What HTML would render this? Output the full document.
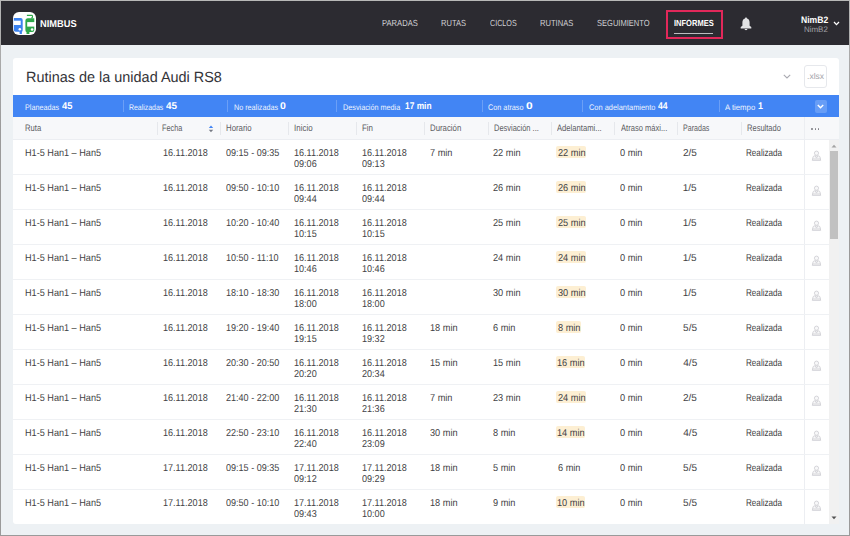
<!DOCTYPE html>
<html><head><meta charset="utf-8"><style>
html,body{margin:0;padding:0;width:850px;height:536px;overflow:hidden;background:#edf1f4}
body{position:relative;font-family:"Liberation Sans", sans-serif}
.t{position:absolute;white-space:nowrap;transform-origin:0 0;text-rendering:geometricPrecision}
</style></head><body>
<div style="position:absolute;left:0px;top:0px;width:850px;height:536px;background:linear-gradient(#b6b6b6,#9a9a9a 25%,#9a9a9a)"></div>
<div style="position:absolute;left:0px;top:0px;width:850px;height:1px;background:#b8b8b7"></div>
<div style="position:absolute;left:1px;top:1px;width:848px;height:534px;background:#edf1f4"></div>
<div style="position:absolute;left:1px;top:1px;width:848px;height:44px;background:#2c2b31"></div>
<svg style="position:absolute;left:13px;top:12px" width="23" height="23" viewBox="0 0 23 23">
<rect x="0" y="0" width="23" height="23" rx="6" fill="#fff"/>
<path d="M0.8 6 H7.6 Q9.7 6 9.7 8.1 V17.7 Q9.7 19.7 8.9 19.7 V21.9 H6.6 V19.7 H2.8 Q0.8 19.7 0.8 17.7 Z" fill="#3b82f0"/>
<rect x="0.8" y="8.7" width="6.9" height="4.3" fill="#fff"/>
<circle cx="6.8" cy="17.2" r="1.25" fill="#fff"/>
<path d="M21.3 6.3 H14.9 Q12.4 6.3 12.4 8.8 V17.9 Q12.4 19.9 13.5 19.9 V22 H16.4 V19.9 H19.3 Q21.3 19.9 21.3 17.9 Z" fill="#2ea84a"/>
<rect x="14.2" y="10.1" width="8" height="4.5" fill="#fff"/>
<circle cx="19.1" cy="17.5" r="1.3" fill="#fff"/>
<path d="M13.9 3.4 H18.6 Q19.5 3.4 19.5 4.3 V5.2 L18.4 6.4" stroke="#2ea84a" stroke-width="1.1" fill="none"/>
</svg>
<div class="t" style="left:39.60px;top:19.64px;font-size:10px;line-height:10px;font-weight:700;color:#fff;transform:scaleX(0.9271);">NIMBUS</div>
<div class="t" style="left:381.79px;top:19.17px;font-size:8.9px;line-height:8.9px;font-weight:400;color:#d2d2d6;transform:scaleX(0.8586);">PARADAS</div>
<div class="t" style="left:441.20px;top:19.17px;font-size:8.9px;line-height:8.9px;font-weight:400;color:#d2d2d6;transform:scaleX(0.8489);">RUTAS</div>
<div class="t" style="left:490.14px;top:19.17px;font-size:8.9px;line-height:8.9px;font-weight:400;color:#d2d2d6;transform:scaleX(0.8090);">CICLOS</div>
<div class="t" style="left:540.39px;top:19.17px;font-size:8.9px;line-height:8.9px;font-weight:400;color:#d2d2d6;transform:scaleX(0.8546);">RUTINAS</div>
<div class="t" style="left:597.26px;top:19.17px;font-size:8.9px;line-height:8.9px;font-weight:400;color:#d2d2d6;transform:scaleX(0.8480);">SEGUIMIENTO</div>
<div class="t" style="left:673.51px;top:19.17px;font-size:8.9px;line-height:8.9px;font-weight:700;color:#fff;transform:scaleX(0.8468);">INFORMES</div>
<div style="position:absolute;left:674px;top:32.5px;width:39px;height:1.2px;background:#bdbdc0"></div>
<div style="position:absolute;left:666px;top:10px;width:57px;height:29px;border:2px solid #e2285a;box-sizing:border-box"></div>
<svg style="position:absolute;left:739.5px;top:17.2px" width="12" height="14" viewBox="0 0 12 14">
<path d="M6 0.5 C6.7 0.5 7 1 7 1.5 C8.9 2 9.6 3.6 9.6 5.6 V8.8 L11.3 10 V11.6 H0.7 V10 L2.4 8.8 V5.6 C2.4 3.6 3.1 2 5 1.5 C5 1 5.3 0.5 6 0.5 Z" fill="#e2e2e4"/>
<path d="M4.6 12 H7.4 C7.3 12.8 6.8 13.2 6 13.2 C5.2 13.2 4.7 12.8 4.6 12 Z" fill="#e2e2e4"/>
</svg>
<div class="t" style="left:800.74px;top:14.94px;font-size:9.4px;line-height:9.4px;font-weight:700;color:#fff;transform:scaleX(0.9178);">NimB2</div>
<div class="t" style="left:804.26px;top:25.53px;font-size:8.0px;line-height:8.0px;font-weight:400;color:#a3a3a8;transform:scaleX(0.9930);">NimB2</div>
<svg style="position:absolute;left:833px;top:21px" width="7" height="5" viewBox="0 0 7 5"><path d="M1 1 L3.5 3.6 L6 1" stroke="#fff" stroke-width="1.3" fill="none"/></svg>
<div style="position:absolute;left:13px;top:58px;width:826px;height:466px;background:#fff;border-radius:3px"></div>
<div class="t" style="left:25.84px;top:70.97px;font-size:14.8px;line-height:14.8px;font-weight:400;color:#333338;transform:scaleX(0.9759);">Rutinas de la unidad Audi RS8</div>
<svg style="position:absolute;left:783px;top:73.5px" width="8" height="5" viewBox="0 0 8 5"><path d="M0.8 0.8 L4 4 L7.2 0.8" stroke="#a9a9b0" stroke-width="1.1" fill="none"/></svg>
<div style="position:absolute;left:804px;top:65px;width:23px;height:23px;border:1px solid #e6e8ec;border-radius:3px;box-sizing:border-box"></div>
<div class="t" style="left:806.93px;top:72.29px;font-size:8.4px;line-height:8.4px;font-weight:400;color:#a5a5aa;transform:scaleX(1.0213);">.xlsx</div>
<div style="position:absolute;left:13px;top:95px;width:826px;height:22px;background:#4285f4"></div>
<div style="position:absolute;left:123px;top:100px;width:1px;height:12px;background:rgba(255,255,255,0.22)"></div>
<div style="position:absolute;left:227px;top:100px;width:1px;height:12px;background:rgba(255,255,255,0.22)"></div>
<div style="position:absolute;left:336px;top:100px;width:1px;height:12px;background:rgba(255,255,255,0.22)"></div>
<div style="position:absolute;left:482px;top:100px;width:1px;height:12px;background:rgba(255,255,255,0.22)"></div>
<div style="position:absolute;left:582px;top:100px;width:1px;height:12px;background:rgba(255,255,255,0.22)"></div>
<div style="position:absolute;left:719px;top:100px;width:1px;height:12px;background:rgba(255,255,255,0.22)"></div>
<div class="t" style="left:25.12px;top:103.94px;font-size:8.1px;line-height:8.1px;font-weight:400;color:#eef4fe;transform:scaleX(0.8891);">Planeadas</div>
<div class="t" style="left:61.86px;top:101.59px;font-size:9.7px;line-height:9.7px;font-weight:700;color:#fff;transform:scaleX(0.9635);">45</div>
<div class="t" style="left:128.95px;top:103.94px;font-size:8.1px;line-height:8.1px;font-weight:400;color:#eef4fe;transform:scaleX(0.8563);">Realizadas</div>
<div class="t" style="left:165.65px;top:101.59px;font-size:9.7px;line-height:9.7px;font-weight:700;color:#fff;transform:scaleX(1.0213);">45</div>
<div class="t" style="left:233.52px;top:103.94px;font-size:8.1px;line-height:8.1px;font-weight:400;color:#eef4fe;transform:scaleX(0.8889);">No realizadas</div>
<div class="t" style="left:280.38px;top:101.59px;font-size:9.7px;line-height:9.7px;font-weight:700;color:#fff;transform:scaleX(1.0852);">0</div>
<div class="t" style="left:343.22px;top:103.94px;font-size:8.1px;line-height:8.1px;font-weight:400;color:#eef4fe;transform:scaleX(0.8963);">Desviación media</div>
<div class="t" style="left:404.50px;top:101.59px;font-size:9.7px;line-height:9.7px;font-weight:700;color:#fff;transform:scaleX(0.8633);">17 min</div>
<div class="t" style="left:487.64px;top:103.94px;font-size:8.1px;line-height:8.1px;font-weight:400;color:#eef4fe;transform:scaleX(0.8976);">Con atraso</div>
<div class="t" style="left:525.92px;top:101.59px;font-size:9.7px;line-height:9.7px;font-weight:700;color:#fff;transform:scaleX(1.2371);">0</div>
<div class="t" style="left:588.63px;top:103.94px;font-size:8.1px;line-height:8.1px;font-weight:400;color:#eef4fe;transform:scaleX(0.9169);">Con adelantamiento</div>
<div class="t" style="left:658.27px;top:101.59px;font-size:9.7px;line-height:9.7px;font-weight:700;color:#fff;transform:scaleX(0.8891);">44</div>
<div class="t" style="left:725.40px;top:103.94px;font-size:8.1px;line-height:8.1px;font-weight:400;color:#eef4fe;transform:scaleX(0.9588);">A tiempo</div>
<div class="t" style="left:758.26px;top:101.59px;font-size:9.7px;line-height:9.7px;font-weight:700;color:#fff;transform:scaleX(0.9213);">1</div>
<div style="position:absolute;left:814.5px;top:100px;width:12.5px;height:12.5px;background:rgba(255,255,255,0.2);border-radius:2px"></div>
<svg style="position:absolute;left:817px;top:104px" width="7" height="5" viewBox="0 0 7 5"><path d="M0.8 0.9 L3.5 3.8 L6.2 0.9" stroke="#fff" stroke-width="1.4" fill="none"/></svg>
<div style="position:absolute;left:13px;top:117px;width:826px;height:22px;background:#f7f8fa"></div>
<div style="position:absolute;left:13px;top:139px;width:826px;height:1px;background:#eceef2"></div>
<div style="position:absolute;left:157px;top:122px;width:1px;height:13px;background:#e6e8ec"></div>
<div style="position:absolute;left:220px;top:122px;width:1px;height:13px;background:#e6e8ec"></div>
<div style="position:absolute;left:288px;top:122px;width:1px;height:13px;background:#e6e8ec"></div>
<div style="position:absolute;left:356px;top:122px;width:1px;height:13px;background:#e6e8ec"></div>
<div style="position:absolute;left:424px;top:122px;width:1px;height:13px;background:#e6e8ec"></div>
<div style="position:absolute;left:488px;top:122px;width:1px;height:13px;background:#e6e8ec"></div>
<div style="position:absolute;left:551px;top:122px;width:1px;height:13px;background:#e6e8ec"></div>
<div style="position:absolute;left:614px;top:122px;width:1px;height:13px;background:#e6e8ec"></div>
<div style="position:absolute;left:677px;top:122px;width:1px;height:13px;background:#e6e8ec"></div>
<div style="position:absolute;left:741px;top:122px;width:1px;height:13px;background:#e6e8ec"></div>
<div style="position:absolute;left:804px;top:117px;width:1px;height:407px;background:#eceef2"></div>
<div class="t" style="left:25.29px;top:123.53px;font-size:9.3px;line-height:9.3px;font-weight:400;color:#5c5c62;transform:scaleX(0.8210);">Ruta</div>
<div class="t" style="left:162.32px;top:123.53px;font-size:9.3px;line-height:9.3px;font-weight:400;color:#5c5c62;transform:scaleX(0.7845);">Fecha</div>
<div class="t" style="left:226.17px;top:123.53px;font-size:9.3px;line-height:9.3px;font-weight:400;color:#5c5c62;transform:scaleX(0.8405);">Horario</div>
<div class="t" style="left:293.88px;top:123.53px;font-size:9.3px;line-height:9.3px;font-weight:400;color:#5c5c62;transform:scaleX(0.8583);">Inicio</div>
<div class="t" style="left:362.16px;top:123.53px;font-size:9.3px;line-height:9.3px;font-weight:400;color:#5c5c62;transform:scaleX(0.8550);">Fin</div>
<div class="t" style="left:430.18px;top:123.53px;font-size:9.3px;line-height:9.3px;font-weight:400;color:#5c5c62;transform:scaleX(0.8396);">Duración</div>
<div class="t" style="left:494.00px;top:123.53px;font-size:9.3px;line-height:9.3px;font-weight:400;color:#5c5c62;transform:scaleX(0.8023);">Desviación ...</div>
<div class="t" style="left:557.40px;top:123.53px;font-size:9.3px;line-height:9.3px;font-weight:400;color:#5c5c62;transform:scaleX(0.8235);">Adelantami...</div>
<div class="t" style="left:620.50px;top:123.53px;font-size:9.3px;line-height:9.3px;font-weight:400;color:#5c5c62;transform:scaleX(0.8145);">Atraso máxi...</div>
<div class="t" style="left:683.43px;top:123.53px;font-size:9.3px;line-height:9.3px;font-weight:400;color:#5c5c62;transform:scaleX(0.7625);">Paradas</div>
<div class="t" style="left:746.50px;top:123.53px;font-size:9.3px;line-height:9.3px;font-weight:400;color:#5c5c62;transform:scaleX(0.8101);">Resultado</div>
<div style="position:absolute;left:811.4px;top:128.4px;width:1.8px;height:1.8px;background:#7c7c82;border-radius:50%"></div>
<div style="position:absolute;left:814.5px;top:128.4px;width:1.8px;height:1.8px;background:#7c7c82;border-radius:50%"></div>
<div style="position:absolute;left:817.6px;top:128.4px;width:1.8px;height:1.8px;background:#7c7c82;border-radius:50%"></div>
<svg style="position:absolute;left:208px;top:125px" width="6" height="8" viewBox="0 0 6 8"><path d="M0.8 3 L3 0.6 L5.2 3 Z" fill="#4285f4"/><path d="M0.8 4.8 L3 7.2 L5.2 4.8 Z" fill="#777b85"/></svg>
<div style="position:absolute;left:13px;top:174px;width:816px;height:1px;background:#eff1f4"></div>
<div class="t" style="left:25.37px;top:148.53px;font-size:10px;line-height:10px;font-weight:400;color:#3f3f44;transform:scaleX(0.9117);">H1-5 Han1 – Han5</div>
<div class="t" style="left:163.12px;top:148.53px;font-size:10px;line-height:10px;font-weight:400;color:#3f3f44;transform:scaleX(0.9076);">16.11.2018</div>
<div class="t" style="left:226.04px;top:148.53px;font-size:10px;line-height:10px;font-weight:400;color:#3f3f44;transform:scaleX(0.9046);">09:15 - 09:35</div>
<div class="t" style="left:294.32px;top:148.53px;font-size:10px;line-height:10px;font-weight:400;color:#3f3f44;transform:scaleX(0.9076);">16.11.2018</div>
<div class="t" style="left:294.14px;top:159.53px;font-size:10px;line-height:10px;font-weight:400;color:#3f3f44;transform:scaleX(0.9076);">09:06</div>
<div class="t" style="left:362.12px;top:148.53px;font-size:10px;line-height:10px;font-weight:400;color:#3f3f44;transform:scaleX(0.9076);">16.11.2018</div>
<div class="t" style="left:362.14px;top:159.53px;font-size:10px;line-height:10px;font-weight:400;color:#3f3f44;transform:scaleX(0.9076);">09:13</div>
<div class="t" style="left:430.14px;top:148.53px;font-size:10px;line-height:10px;font-weight:400;color:#3f3f44;transform:scaleX(0.9185);">7 min</div>
<div class="t" style="left:492.74px;top:148.53px;font-size:10px;line-height:10px;font-weight:400;color:#3f3f44;transform:scaleX(0.9185);">22 min</div>
<div style="position:absolute;left:556.2px;top:146.2px;width:29.5px;height:11.8px;background:#fdefd3;border-radius:2px"></div>
<div class="t" style="left:557.54px;top:148.53px;font-size:10px;line-height:10px;font-weight:400;color:#3f3f44;transform:scaleX(0.9185);">22 min</div>
<div class="t" style="left:619.63px;top:148.53px;font-size:10px;line-height:10px;font-weight:400;color:#3f3f44;transform:scaleX(0.9185);">0 min</div>
<div class="t" style="left:683.00px;top:148.53px;font-size:10px;line-height:10px;font-weight:400;color:#3f3f44;">2/5</div>
<div class="t" style="left:746.35px;top:148.53px;font-size:10px;line-height:10px;font-weight:400;color:#3f3f44;transform:scaleX(0.8110);">Realizada</div>
<svg style="position:absolute;left:811px;top:149.8px" width="12" height="12" viewBox="0 0 12 12"><g stroke="#d0d0d5" stroke-width="0.85" fill="#f8f8f9"><circle cx="5.5" cy="3.2" r="2.1"/><path d="M1.3 10.4 L2 7 Q2.4 5.8 3.8 5.8 H7.2 Q8.6 5.8 9 7 L9.7 10.4 Z"/><path d="M4.2 5.9 L5.5 8.1 L6.8 5.9" fill="none"/><path d="M1.5 9 H9.5" fill="none"/></g></svg>
<div style="position:absolute;left:13px;top:209px;width:816px;height:1px;background:#eff1f4"></div>
<div class="t" style="left:25.37px;top:183.53px;font-size:10px;line-height:10px;font-weight:400;color:#3f3f44;transform:scaleX(0.9117);">H1-5 Han1 – Han5</div>
<div class="t" style="left:163.12px;top:183.53px;font-size:10px;line-height:10px;font-weight:400;color:#3f3f44;transform:scaleX(0.9076);">16.11.2018</div>
<div class="t" style="left:226.04px;top:183.53px;font-size:10px;line-height:10px;font-weight:400;color:#3f3f44;transform:scaleX(0.9046);">09:50 - 10:10</div>
<div class="t" style="left:294.32px;top:183.53px;font-size:10px;line-height:10px;font-weight:400;color:#3f3f44;transform:scaleX(0.9076);">16.11.2018</div>
<div class="t" style="left:294.14px;top:194.53px;font-size:10px;line-height:10px;font-weight:400;color:#3f3f44;transform:scaleX(0.9076);">09:44</div>
<div class="t" style="left:362.12px;top:183.53px;font-size:10px;line-height:10px;font-weight:400;color:#3f3f44;transform:scaleX(0.9076);">16.11.2018</div>
<div class="t" style="left:362.14px;top:194.53px;font-size:10px;line-height:10px;font-weight:400;color:#3f3f44;transform:scaleX(0.9076);">09:44</div>
<div class="t" style="left:492.74px;top:183.53px;font-size:10px;line-height:10px;font-weight:400;color:#3f3f44;transform:scaleX(0.9185);">26 min</div>
<div style="position:absolute;left:556.2px;top:181.2px;width:29.5px;height:11.8px;background:#fdefd3;border-radius:2px"></div>
<div class="t" style="left:557.54px;top:183.53px;font-size:10px;line-height:10px;font-weight:400;color:#3f3f44;transform:scaleX(0.9185);">26 min</div>
<div class="t" style="left:619.63px;top:183.53px;font-size:10px;line-height:10px;font-weight:400;color:#3f3f44;transform:scaleX(0.9185);">0 min</div>
<div class="t" style="left:682.75px;top:183.53px;font-size:10px;line-height:10px;font-weight:400;color:#3f3f44;">1/5</div>
<div class="t" style="left:746.35px;top:183.53px;font-size:10px;line-height:10px;font-weight:400;color:#3f3f44;transform:scaleX(0.8110);">Realizada</div>
<svg style="position:absolute;left:811px;top:184.8px" width="12" height="12" viewBox="0 0 12 12"><g stroke="#d0d0d5" stroke-width="0.85" fill="#f8f8f9"><circle cx="5.5" cy="3.2" r="2.1"/><path d="M1.3 10.4 L2 7 Q2.4 5.8 3.8 5.8 H7.2 Q8.6 5.8 9 7 L9.7 10.4 Z"/><path d="M4.2 5.9 L5.5 8.1 L6.8 5.9" fill="none"/><path d="M1.5 9 H9.5" fill="none"/></g></svg>
<div style="position:absolute;left:13px;top:244px;width:816px;height:1px;background:#eff1f4"></div>
<div class="t" style="left:25.37px;top:218.53px;font-size:10px;line-height:10px;font-weight:400;color:#3f3f44;transform:scaleX(0.9117);">H1-5 Han1 – Han5</div>
<div class="t" style="left:163.12px;top:218.53px;font-size:10px;line-height:10px;font-weight:400;color:#3f3f44;transform:scaleX(0.9076);">16.11.2018</div>
<div class="t" style="left:225.72px;top:218.53px;font-size:10px;line-height:10px;font-weight:400;color:#3f3f44;transform:scaleX(0.9046);">10:20 - 10:40</div>
<div class="t" style="left:294.32px;top:218.53px;font-size:10px;line-height:10px;font-weight:400;color:#3f3f44;transform:scaleX(0.9076);">16.11.2018</div>
<div class="t" style="left:293.82px;top:229.53px;font-size:10px;line-height:10px;font-weight:400;color:#3f3f44;transform:scaleX(0.9076);">10:15</div>
<div class="t" style="left:362.12px;top:218.53px;font-size:10px;line-height:10px;font-weight:400;color:#3f3f44;transform:scaleX(0.9076);">16.11.2018</div>
<div class="t" style="left:361.82px;top:229.53px;font-size:10px;line-height:10px;font-weight:400;color:#3f3f44;transform:scaleX(0.9076);">10:15</div>
<div class="t" style="left:492.74px;top:218.53px;font-size:10px;line-height:10px;font-weight:400;color:#3f3f44;transform:scaleX(0.9185);">25 min</div>
<div style="position:absolute;left:556.2px;top:216.2px;width:29.5px;height:11.8px;background:#fdefd3;border-radius:2px"></div>
<div class="t" style="left:557.54px;top:218.53px;font-size:10px;line-height:10px;font-weight:400;color:#3f3f44;transform:scaleX(0.9185);">25 min</div>
<div class="t" style="left:619.63px;top:218.53px;font-size:10px;line-height:10px;font-weight:400;color:#3f3f44;transform:scaleX(0.9185);">0 min</div>
<div class="t" style="left:682.75px;top:218.53px;font-size:10px;line-height:10px;font-weight:400;color:#3f3f44;">1/5</div>
<div class="t" style="left:746.35px;top:218.53px;font-size:10px;line-height:10px;font-weight:400;color:#3f3f44;transform:scaleX(0.8110);">Realizada</div>
<svg style="position:absolute;left:811px;top:219.8px" width="12" height="12" viewBox="0 0 12 12"><g stroke="#d0d0d5" stroke-width="0.85" fill="#f8f8f9"><circle cx="5.5" cy="3.2" r="2.1"/><path d="M1.3 10.4 L2 7 Q2.4 5.8 3.8 5.8 H7.2 Q8.6 5.8 9 7 L9.7 10.4 Z"/><path d="M4.2 5.9 L5.5 8.1 L6.8 5.9" fill="none"/><path d="M1.5 9 H9.5" fill="none"/></g></svg>
<div style="position:absolute;left:13px;top:279px;width:816px;height:1px;background:#eff1f4"></div>
<div class="t" style="left:25.37px;top:253.53px;font-size:10px;line-height:10px;font-weight:400;color:#3f3f44;transform:scaleX(0.9117);">H1-5 Han1 – Han5</div>
<div class="t" style="left:163.12px;top:253.53px;font-size:10px;line-height:10px;font-weight:400;color:#3f3f44;transform:scaleX(0.9076);">16.11.2018</div>
<div class="t" style="left:225.72px;top:253.53px;font-size:10px;line-height:10px;font-weight:400;color:#3f3f44;transform:scaleX(0.9046);">10:50 - 11:10</div>
<div class="t" style="left:294.32px;top:253.53px;font-size:10px;line-height:10px;font-weight:400;color:#3f3f44;transform:scaleX(0.9076);">16.11.2018</div>
<div class="t" style="left:293.82px;top:264.54px;font-size:10px;line-height:10px;font-weight:400;color:#3f3f44;transform:scaleX(0.9076);">10:46</div>
<div class="t" style="left:362.12px;top:253.53px;font-size:10px;line-height:10px;font-weight:400;color:#3f3f44;transform:scaleX(0.9076);">16.11.2018</div>
<div class="t" style="left:361.82px;top:264.54px;font-size:10px;line-height:10px;font-weight:400;color:#3f3f44;transform:scaleX(0.9076);">10:46</div>
<div class="t" style="left:492.74px;top:253.53px;font-size:10px;line-height:10px;font-weight:400;color:#3f3f44;transform:scaleX(0.9185);">24 min</div>
<div style="position:absolute;left:556.2px;top:251.2px;width:29.5px;height:11.8px;background:#fdefd3;border-radius:2px"></div>
<div class="t" style="left:557.54px;top:253.53px;font-size:10px;line-height:10px;font-weight:400;color:#3f3f44;transform:scaleX(0.9185);">24 min</div>
<div class="t" style="left:619.63px;top:253.53px;font-size:10px;line-height:10px;font-weight:400;color:#3f3f44;transform:scaleX(0.9185);">0 min</div>
<div class="t" style="left:682.75px;top:253.53px;font-size:10px;line-height:10px;font-weight:400;color:#3f3f44;">1/5</div>
<div class="t" style="left:746.35px;top:253.53px;font-size:10px;line-height:10px;font-weight:400;color:#3f3f44;transform:scaleX(0.8110);">Realizada</div>
<svg style="position:absolute;left:811px;top:254.8px" width="12" height="12" viewBox="0 0 12 12"><g stroke="#d0d0d5" stroke-width="0.85" fill="#f8f8f9"><circle cx="5.5" cy="3.2" r="2.1"/><path d="M1.3 10.4 L2 7 Q2.4 5.8 3.8 5.8 H7.2 Q8.6 5.8 9 7 L9.7 10.4 Z"/><path d="M4.2 5.9 L5.5 8.1 L6.8 5.9" fill="none"/><path d="M1.5 9 H9.5" fill="none"/></g></svg>
<div style="position:absolute;left:13px;top:314px;width:816px;height:1px;background:#eff1f4"></div>
<div class="t" style="left:25.37px;top:288.54px;font-size:10px;line-height:10px;font-weight:400;color:#3f3f44;transform:scaleX(0.9117);">H1-5 Han1 – Han5</div>
<div class="t" style="left:163.12px;top:288.54px;font-size:10px;line-height:10px;font-weight:400;color:#3f3f44;transform:scaleX(0.9076);">16.11.2018</div>
<div class="t" style="left:225.72px;top:288.54px;font-size:10px;line-height:10px;font-weight:400;color:#3f3f44;transform:scaleX(0.9046);">18:10 - 18:30</div>
<div class="t" style="left:294.32px;top:288.54px;font-size:10px;line-height:10px;font-weight:400;color:#3f3f44;transform:scaleX(0.9076);">16.11.2018</div>
<div class="t" style="left:293.82px;top:299.54px;font-size:10px;line-height:10px;font-weight:400;color:#3f3f44;transform:scaleX(0.9076);">18:00</div>
<div class="t" style="left:362.12px;top:288.54px;font-size:10px;line-height:10px;font-weight:400;color:#3f3f44;transform:scaleX(0.9076);">16.11.2018</div>
<div class="t" style="left:361.82px;top:299.54px;font-size:10px;line-height:10px;font-weight:400;color:#3f3f44;transform:scaleX(0.9076);">18:00</div>
<div class="t" style="left:492.83px;top:288.54px;font-size:10px;line-height:10px;font-weight:400;color:#3f3f44;transform:scaleX(0.9185);">30 min</div>
<div style="position:absolute;left:556.2px;top:286.2px;width:29.59px;height:11.8px;background:#fdefd3;border-radius:2px"></div>
<div class="t" style="left:557.63px;top:288.54px;font-size:10px;line-height:10px;font-weight:400;color:#3f3f44;transform:scaleX(0.9185);">30 min</div>
<div class="t" style="left:619.63px;top:288.54px;font-size:10px;line-height:10px;font-weight:400;color:#3f3f44;transform:scaleX(0.9185);">0 min</div>
<div class="t" style="left:682.75px;top:288.54px;font-size:10px;line-height:10px;font-weight:400;color:#3f3f44;">1/5</div>
<div class="t" style="left:746.35px;top:288.54px;font-size:10px;line-height:10px;font-weight:400;color:#3f3f44;transform:scaleX(0.8110);">Realizada</div>
<svg style="position:absolute;left:811px;top:289.8px" width="12" height="12" viewBox="0 0 12 12"><g stroke="#d0d0d5" stroke-width="0.85" fill="#f8f8f9"><circle cx="5.5" cy="3.2" r="2.1"/><path d="M1.3 10.4 L2 7 Q2.4 5.8 3.8 5.8 H7.2 Q8.6 5.8 9 7 L9.7 10.4 Z"/><path d="M4.2 5.9 L5.5 8.1 L6.8 5.9" fill="none"/><path d="M1.5 9 H9.5" fill="none"/></g></svg>
<div style="position:absolute;left:13px;top:349px;width:816px;height:1px;background:#eff1f4"></div>
<div class="t" style="left:25.37px;top:323.54px;font-size:10px;line-height:10px;font-weight:400;color:#3f3f44;transform:scaleX(0.9117);">H1-5 Han1 – Han5</div>
<div class="t" style="left:163.12px;top:323.54px;font-size:10px;line-height:10px;font-weight:400;color:#3f3f44;transform:scaleX(0.9076);">16.11.2018</div>
<div class="t" style="left:225.72px;top:323.54px;font-size:10px;line-height:10px;font-weight:400;color:#3f3f44;transform:scaleX(0.9046);">19:20 - 19:40</div>
<div class="t" style="left:294.32px;top:323.54px;font-size:10px;line-height:10px;font-weight:400;color:#3f3f44;transform:scaleX(0.9076);">16.11.2018</div>
<div class="t" style="left:293.82px;top:334.54px;font-size:10px;line-height:10px;font-weight:400;color:#3f3f44;transform:scaleX(0.9076);">19:15</div>
<div class="t" style="left:362.12px;top:323.54px;font-size:10px;line-height:10px;font-weight:400;color:#3f3f44;transform:scaleX(0.9076);">16.11.2018</div>
<div class="t" style="left:361.82px;top:334.54px;font-size:10px;line-height:10px;font-weight:400;color:#3f3f44;transform:scaleX(0.9076);">19:32</div>
<div class="t" style="left:429.91px;top:323.54px;font-size:10px;line-height:10px;font-weight:400;color:#3f3f44;transform:scaleX(0.9185);">18 min</div>
<div class="t" style="left:492.74px;top:323.54px;font-size:10px;line-height:10px;font-weight:400;color:#3f3f44;transform:scaleX(0.9185);">6 min</div>
<div style="position:absolute;left:556.2px;top:321.2px;width:24.45px;height:11.8px;background:#fdefd3;border-radius:2px"></div>
<div class="t" style="left:557.59px;top:323.54px;font-size:10px;line-height:10px;font-weight:400;color:#3f3f44;transform:scaleX(0.9185);">8 min</div>
<div class="t" style="left:619.63px;top:323.54px;font-size:10px;line-height:10px;font-weight:400;color:#3f3f44;transform:scaleX(0.9185);">0 min</div>
<div class="t" style="left:683.10px;top:323.54px;font-size:10px;line-height:10px;font-weight:400;color:#3f3f44;">5/5</div>
<div class="t" style="left:746.35px;top:323.54px;font-size:10px;line-height:10px;font-weight:400;color:#3f3f44;transform:scaleX(0.8110);">Realizada</div>
<svg style="position:absolute;left:811px;top:324.8px" width="12" height="12" viewBox="0 0 12 12"><g stroke="#d0d0d5" stroke-width="0.85" fill="#f8f8f9"><circle cx="5.5" cy="3.2" r="2.1"/><path d="M1.3 10.4 L2 7 Q2.4 5.8 3.8 5.8 H7.2 Q8.6 5.8 9 7 L9.7 10.4 Z"/><path d="M4.2 5.9 L5.5 8.1 L6.8 5.9" fill="none"/><path d="M1.5 9 H9.5" fill="none"/></g></svg>
<div style="position:absolute;left:13px;top:384px;width:816px;height:1px;background:#eff1f4"></div>
<div class="t" style="left:25.37px;top:358.54px;font-size:10px;line-height:10px;font-weight:400;color:#3f3f44;transform:scaleX(0.9117);">H1-5 Han1 – Han5</div>
<div class="t" style="left:163.12px;top:358.54px;font-size:10px;line-height:10px;font-weight:400;color:#3f3f44;transform:scaleX(0.9076);">16.11.2018</div>
<div class="t" style="left:225.95px;top:358.54px;font-size:10px;line-height:10px;font-weight:400;color:#3f3f44;transform:scaleX(0.9046);">20:30 - 20:50</div>
<div class="t" style="left:294.32px;top:358.54px;font-size:10px;line-height:10px;font-weight:400;color:#3f3f44;transform:scaleX(0.9076);">16.11.2018</div>
<div class="t" style="left:294.05px;top:369.54px;font-size:10px;line-height:10px;font-weight:400;color:#3f3f44;transform:scaleX(0.9076);">20:20</div>
<div class="t" style="left:362.12px;top:358.54px;font-size:10px;line-height:10px;font-weight:400;color:#3f3f44;transform:scaleX(0.9076);">16.11.2018</div>
<div class="t" style="left:362.05px;top:369.54px;font-size:10px;line-height:10px;font-weight:400;color:#3f3f44;transform:scaleX(0.9076);">20:34</div>
<div class="t" style="left:429.91px;top:358.54px;font-size:10px;line-height:10px;font-weight:400;color:#3f3f44;transform:scaleX(0.9185);">15 min</div>
<div class="t" style="left:492.51px;top:358.54px;font-size:10px;line-height:10px;font-weight:400;color:#3f3f44;transform:scaleX(0.9185);">15 min</div>
<div style="position:absolute;left:556.2px;top:356.2px;width:29.27px;height:11.8px;background:#fdefd3;border-radius:2px"></div>
<div class="t" style="left:557.31px;top:358.54px;font-size:10px;line-height:10px;font-weight:400;color:#3f3f44;transform:scaleX(0.9185);">16 min</div>
<div class="t" style="left:619.63px;top:358.54px;font-size:10px;line-height:10px;font-weight:400;color:#3f3f44;transform:scaleX(0.9185);">0 min</div>
<div class="t" style="left:683.30px;top:358.54px;font-size:10px;line-height:10px;font-weight:400;color:#3f3f44;">4/5</div>
<div class="t" style="left:746.35px;top:358.54px;font-size:10px;line-height:10px;font-weight:400;color:#3f3f44;transform:scaleX(0.8110);">Realizada</div>
<svg style="position:absolute;left:811px;top:359.8px" width="12" height="12" viewBox="0 0 12 12"><g stroke="#d0d0d5" stroke-width="0.85" fill="#f8f8f9"><circle cx="5.5" cy="3.2" r="2.1"/><path d="M1.3 10.4 L2 7 Q2.4 5.8 3.8 5.8 H7.2 Q8.6 5.8 9 7 L9.7 10.4 Z"/><path d="M4.2 5.9 L5.5 8.1 L6.8 5.9" fill="none"/><path d="M1.5 9 H9.5" fill="none"/></g></svg>
<div style="position:absolute;left:13px;top:419px;width:816px;height:1px;background:#eff1f4"></div>
<div class="t" style="left:25.37px;top:393.54px;font-size:10px;line-height:10px;font-weight:400;color:#3f3f44;transform:scaleX(0.9117);">H1-5 Han1 – Han5</div>
<div class="t" style="left:163.12px;top:393.54px;font-size:10px;line-height:10px;font-weight:400;color:#3f3f44;transform:scaleX(0.9076);">16.11.2018</div>
<div class="t" style="left:225.95px;top:393.54px;font-size:10px;line-height:10px;font-weight:400;color:#3f3f44;transform:scaleX(0.9046);">21:40 - 22:00</div>
<div class="t" style="left:294.32px;top:393.54px;font-size:10px;line-height:10px;font-weight:400;color:#3f3f44;transform:scaleX(0.9076);">16.11.2018</div>
<div class="t" style="left:294.05px;top:404.54px;font-size:10px;line-height:10px;font-weight:400;color:#3f3f44;transform:scaleX(0.9076);">21:30</div>
<div class="t" style="left:362.12px;top:393.54px;font-size:10px;line-height:10px;font-weight:400;color:#3f3f44;transform:scaleX(0.9076);">16.11.2018</div>
<div class="t" style="left:362.05px;top:404.54px;font-size:10px;line-height:10px;font-weight:400;color:#3f3f44;transform:scaleX(0.9076);">21:36</div>
<div class="t" style="left:430.14px;top:393.54px;font-size:10px;line-height:10px;font-weight:400;color:#3f3f44;transform:scaleX(0.9185);">7 min</div>
<div class="t" style="left:492.74px;top:393.54px;font-size:10px;line-height:10px;font-weight:400;color:#3f3f44;transform:scaleX(0.9185);">23 min</div>
<div style="position:absolute;left:556.2px;top:391.2px;width:29.5px;height:11.8px;background:#fdefd3;border-radius:2px"></div>
<div class="t" style="left:557.54px;top:393.54px;font-size:10px;line-height:10px;font-weight:400;color:#3f3f44;transform:scaleX(0.9185);">24 min</div>
<div class="t" style="left:619.63px;top:393.54px;font-size:10px;line-height:10px;font-weight:400;color:#3f3f44;transform:scaleX(0.9185);">0 min</div>
<div class="t" style="left:683.00px;top:393.54px;font-size:10px;line-height:10px;font-weight:400;color:#3f3f44;">2/5</div>
<div class="t" style="left:746.35px;top:393.54px;font-size:10px;line-height:10px;font-weight:400;color:#3f3f44;transform:scaleX(0.8110);">Realizada</div>
<svg style="position:absolute;left:811px;top:394.8px" width="12" height="12" viewBox="0 0 12 12"><g stroke="#d0d0d5" stroke-width="0.85" fill="#f8f8f9"><circle cx="5.5" cy="3.2" r="2.1"/><path d="M1.3 10.4 L2 7 Q2.4 5.8 3.8 5.8 H7.2 Q8.6 5.8 9 7 L9.7 10.4 Z"/><path d="M4.2 5.9 L5.5 8.1 L6.8 5.9" fill="none"/><path d="M1.5 9 H9.5" fill="none"/></g></svg>
<div style="position:absolute;left:13px;top:454px;width:816px;height:1px;background:#eff1f4"></div>
<div class="t" style="left:25.37px;top:428.54px;font-size:10px;line-height:10px;font-weight:400;color:#3f3f44;transform:scaleX(0.9117);">H1-5 Han1 – Han5</div>
<div class="t" style="left:163.12px;top:428.54px;font-size:10px;line-height:10px;font-weight:400;color:#3f3f44;transform:scaleX(0.9076);">16.11.2018</div>
<div class="t" style="left:225.95px;top:428.54px;font-size:10px;line-height:10px;font-weight:400;color:#3f3f44;transform:scaleX(0.9046);">22:50 - 23:10</div>
<div class="t" style="left:294.32px;top:428.54px;font-size:10px;line-height:10px;font-weight:400;color:#3f3f44;transform:scaleX(0.9076);">16.11.2018</div>
<div class="t" style="left:294.05px;top:439.54px;font-size:10px;line-height:10px;font-weight:400;color:#3f3f44;transform:scaleX(0.9076);">22:40</div>
<div class="t" style="left:362.12px;top:428.54px;font-size:10px;line-height:10px;font-weight:400;color:#3f3f44;transform:scaleX(0.9076);">16.11.2018</div>
<div class="t" style="left:362.05px;top:439.54px;font-size:10px;line-height:10px;font-weight:400;color:#3f3f44;transform:scaleX(0.9076);">23:09</div>
<div class="t" style="left:430.23px;top:428.54px;font-size:10px;line-height:10px;font-weight:400;color:#3f3f44;transform:scaleX(0.9185);">30 min</div>
<div class="t" style="left:492.79px;top:428.54px;font-size:10px;line-height:10px;font-weight:400;color:#3f3f44;transform:scaleX(0.9185);">8 min</div>
<div style="position:absolute;left:556.2px;top:426.2px;width:29.27px;height:11.8px;background:#fdefd3;border-radius:2px"></div>
<div class="t" style="left:557.31px;top:428.54px;font-size:10px;line-height:10px;font-weight:400;color:#3f3f44;transform:scaleX(0.9185);">14 min</div>
<div class="t" style="left:619.63px;top:428.54px;font-size:10px;line-height:10px;font-weight:400;color:#3f3f44;transform:scaleX(0.9185);">0 min</div>
<div class="t" style="left:683.30px;top:428.54px;font-size:10px;line-height:10px;font-weight:400;color:#3f3f44;">4/5</div>
<div class="t" style="left:746.35px;top:428.54px;font-size:10px;line-height:10px;font-weight:400;color:#3f3f44;transform:scaleX(0.8110);">Realizada</div>
<svg style="position:absolute;left:811px;top:429.8px" width="12" height="12" viewBox="0 0 12 12"><g stroke="#d0d0d5" stroke-width="0.85" fill="#f8f8f9"><circle cx="5.5" cy="3.2" r="2.1"/><path d="M1.3 10.4 L2 7 Q2.4 5.8 3.8 5.8 H7.2 Q8.6 5.8 9 7 L9.7 10.4 Z"/><path d="M4.2 5.9 L5.5 8.1 L6.8 5.9" fill="none"/><path d="M1.5 9 H9.5" fill="none"/></g></svg>
<div style="position:absolute;left:13px;top:489px;width:816px;height:1px;background:#eff1f4"></div>
<div class="t" style="left:25.37px;top:463.54px;font-size:10px;line-height:10px;font-weight:400;color:#3f3f44;transform:scaleX(0.9117);">H1-5 Han1 – Han5</div>
<div class="t" style="left:163.12px;top:463.54px;font-size:10px;line-height:10px;font-weight:400;color:#3f3f44;transform:scaleX(0.9076);">17.11.2018</div>
<div class="t" style="left:226.04px;top:463.54px;font-size:10px;line-height:10px;font-weight:400;color:#3f3f44;transform:scaleX(0.9046);">09:15 - 09:35</div>
<div class="t" style="left:294.32px;top:463.54px;font-size:10px;line-height:10px;font-weight:400;color:#3f3f44;transform:scaleX(0.9076);">17.11.2018</div>
<div class="t" style="left:294.14px;top:474.54px;font-size:10px;line-height:10px;font-weight:400;color:#3f3f44;transform:scaleX(0.9076);">09:12</div>
<div class="t" style="left:362.12px;top:463.54px;font-size:10px;line-height:10px;font-weight:400;color:#3f3f44;transform:scaleX(0.9076);">17.11.2018</div>
<div class="t" style="left:362.14px;top:474.54px;font-size:10px;line-height:10px;font-weight:400;color:#3f3f44;transform:scaleX(0.9076);">09:29</div>
<div class="t" style="left:429.91px;top:463.54px;font-size:10px;line-height:10px;font-weight:400;color:#3f3f44;transform:scaleX(0.9185);">18 min</div>
<div class="t" style="left:492.83px;top:463.54px;font-size:10px;line-height:10px;font-weight:400;color:#3f3f44;transform:scaleX(0.9185);">5 min</div>
<div class="t" style="left:557.54px;top:463.54px;font-size:10px;line-height:10px;font-weight:400;color:#3f3f44;transform:scaleX(0.9185);">6 min</div>
<div class="t" style="left:619.63px;top:463.54px;font-size:10px;line-height:10px;font-weight:400;color:#3f3f44;transform:scaleX(0.9185);">0 min</div>
<div class="t" style="left:683.10px;top:463.54px;font-size:10px;line-height:10px;font-weight:400;color:#3f3f44;">5/5</div>
<div class="t" style="left:746.35px;top:463.54px;font-size:10px;line-height:10px;font-weight:400;color:#3f3f44;transform:scaleX(0.8110);">Realizada</div>
<svg style="position:absolute;left:811px;top:464.8px" width="12" height="12" viewBox="0 0 12 12"><g stroke="#d0d0d5" stroke-width="0.85" fill="#f8f8f9"><circle cx="5.5" cy="3.2" r="2.1"/><path d="M1.3 10.4 L2 7 Q2.4 5.8 3.8 5.8 H7.2 Q8.6 5.8 9 7 L9.7 10.4 Z"/><path d="M4.2 5.9 L5.5 8.1 L6.8 5.9" fill="none"/><path d="M1.5 9 H9.5" fill="none"/></g></svg>
<div class="t" style="left:25.37px;top:498.54px;font-size:10px;line-height:10px;font-weight:400;color:#3f3f44;transform:scaleX(0.9117);">H1-5 Han1 – Han5</div>
<div class="t" style="left:163.12px;top:498.54px;font-size:10px;line-height:10px;font-weight:400;color:#3f3f44;transform:scaleX(0.9076);">17.11.2018</div>
<div class="t" style="left:226.04px;top:498.54px;font-size:10px;line-height:10px;font-weight:400;color:#3f3f44;transform:scaleX(0.9046);">09:50 - 10:10</div>
<div class="t" style="left:294.32px;top:498.54px;font-size:10px;line-height:10px;font-weight:400;color:#3f3f44;transform:scaleX(0.9076);">17.11.2018</div>
<div class="t" style="left:294.14px;top:509.54px;font-size:10px;line-height:10px;font-weight:400;color:#3f3f44;transform:scaleX(0.9076);">09:43</div>
<div class="t" style="left:362.12px;top:498.54px;font-size:10px;line-height:10px;font-weight:400;color:#3f3f44;transform:scaleX(0.9076);">17.11.2018</div>
<div class="t" style="left:361.82px;top:509.54px;font-size:10px;line-height:10px;font-weight:400;color:#3f3f44;transform:scaleX(0.9076);">10:00</div>
<div class="t" style="left:429.91px;top:498.54px;font-size:10px;line-height:10px;font-weight:400;color:#3f3f44;transform:scaleX(0.9185);">18 min</div>
<div class="t" style="left:492.79px;top:498.54px;font-size:10px;line-height:10px;font-weight:400;color:#3f3f44;transform:scaleX(0.9185);">9 min</div>
<div style="position:absolute;left:556.2px;top:496.2px;width:29.27px;height:11.8px;background:#fdefd3;border-radius:2px"></div>
<div class="t" style="left:557.31px;top:498.54px;font-size:10px;line-height:10px;font-weight:400;color:#3f3f44;transform:scaleX(0.9185);">10 min</div>
<div class="t" style="left:619.63px;top:498.54px;font-size:10px;line-height:10px;font-weight:400;color:#3f3f44;transform:scaleX(0.9185);">0 min</div>
<div class="t" style="left:683.10px;top:498.54px;font-size:10px;line-height:10px;font-weight:400;color:#3f3f44;">5/5</div>
<div class="t" style="left:746.35px;top:498.54px;font-size:10px;line-height:10px;font-weight:400;color:#3f3f44;transform:scaleX(0.8110);">Realizada</div>
<svg style="position:absolute;left:811px;top:499.8px" width="12" height="12" viewBox="0 0 12 12"><g stroke="#d0d0d5" stroke-width="0.85" fill="#f8f8f9"><circle cx="5.5" cy="3.2" r="2.1"/><path d="M1.3 10.4 L2 7 Q2.4 5.8 3.8 5.8 H7.2 Q8.6 5.8 9 7 L9.7 10.4 Z"/><path d="M4.2 5.9 L5.5 8.1 L6.8 5.9" fill="none"/><path d="M1.5 9 H9.5" fill="none"/></g></svg>
<div style="position:absolute;left:829px;top:140px;width:10px;height:384px;background:#f1f1f1"></div>
<div style="position:absolute;left:830px;top:151px;width:8px;height:88px;background:#c1c1c1"></div>
<svg style="position:absolute;left:830px;top:143px" width="8" height="6" viewBox="0 0 8 6"><path d="M1.5 4.5 L4 1.8 L6.5 4.5 Z" fill="#a3a3a3"/></svg>
<svg style="position:absolute;left:830px;top:515px" width="8" height="6" viewBox="0 0 8 6"><path d="M1.5 1.5 L4 4.2 L6.5 1.5 Z" fill="#505050"/></svg>
</body></html>
